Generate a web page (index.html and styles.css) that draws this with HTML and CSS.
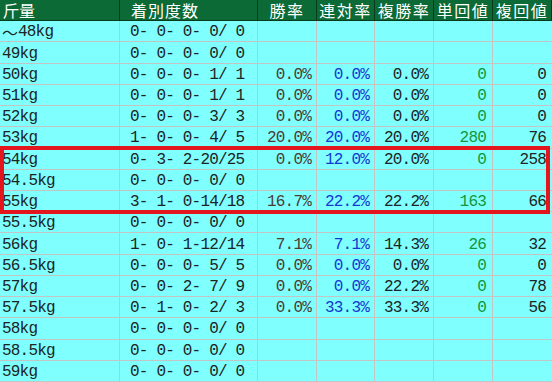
FILE: index.html
```html
<!DOCTYPE html>
<html lang="ja">
<head>
<meta charset="utf-8">
<title>斤量別成績</title>
<link rel="stylesheet" href="styles.css">
</head>
<body>
<div class="wrap">
  <div class="grid">
    <div class="h h1">斤量</div><div class="h h2">着別度数</div><div class="h hc">勝率</div><div class="h hc">連対率</div><div class="h hc">複勝率</div><div class="h hc">単回値</div><div class="h hc">複回値</div>

    <div class="c w"><span class="wave">～</span>48kg</div><div class="c d">0- 0- 0- 0/ 0</div><div class="c r p1"></div><div class="c r p2"></div><div class="c r p3"></div><div class="c r g"></div><div class="c r k"></div>
    <div class="c w">49kg</div><div class="c d">0- 0- 0- 0/ 0</div><div class="c r p1"></div><div class="c r p2"></div><div class="c r p3"></div><div class="c r g"></div><div class="c r k"></div>
    <div class="c w">50kg</div><div class="c d">0- 0- 0- 1/ 1</div><div class="c r p1">0.0%</div><div class="c r p2">0.0%</div><div class="c r p3">0.0%</div><div class="c r g">0</div><div class="c r k">0</div>
    <div class="c w">51kg</div><div class="c d">0- 0- 0- 1/ 1</div><div class="c r p1">0.0%</div><div class="c r p2">0.0%</div><div class="c r p3">0.0%</div><div class="c r g">0</div><div class="c r k">0</div>
    <div class="c w">52kg</div><div class="c d">0- 0- 0- 3/ 3</div><div class="c r p1">0.0%</div><div class="c r p2">0.0%</div><div class="c r p3">0.0%</div><div class="c r g">0</div><div class="c r k">0</div>
    <div class="c w">53kg</div><div class="c d">1- 0- 0- 4/ 5</div><div class="c r p1">20.0%</div><div class="c r p2">20.0%</div><div class="c r p3">20.0%</div><div class="c r g">280</div><div class="c r k">76</div>
    <div class="c w">54kg</div><div class="c d">0- 3- 2-20/25</div><div class="c r p1">0.0%</div><div class="c r p2">12.0%</div><div class="c r p3">20.0%</div><div class="c r g">0</div><div class="c r k">258</div>
    <div class="c w">54.5kg</div><div class="c d">0- 0- 0- 0/ 0</div><div class="c r p1"></div><div class="c r p2"></div><div class="c r p3"></div><div class="c r g"></div><div class="c r k"></div>
    <div class="c w">55kg</div><div class="c d">3- 1- 0-14/18</div><div class="c r p1">16.7%</div><div class="c r p2">22.2%</div><div class="c r p3">22.2%</div><div class="c r g">163</div><div class="c r k">66</div>
    <div class="c w">55.5kg</div><div class="c d">0- 0- 0- 0/ 0</div><div class="c r p1"></div><div class="c r p2"></div><div class="c r p3"></div><div class="c r g"></div><div class="c r k"></div>
    <div class="c w">56kg</div><div class="c d">1- 0- 1-12/14</div><div class="c r p1">7.1%</div><div class="c r p2">7.1%</div><div class="c r p3">14.3%</div><div class="c r g">26</div><div class="c r k">32</div>
    <div class="c w">56.5kg</div><div class="c d">0- 0- 0- 5/ 5</div><div class="c r p1">0.0%</div><div class="c r p2">0.0%</div><div class="c r p3">0.0%</div><div class="c r g">0</div><div class="c r k">0</div>
    <div class="c w">57kg</div><div class="c d">0- 0- 2- 7/ 9</div><div class="c r p1">0.0%</div><div class="c r p2">0.0%</div><div class="c r p3">22.2%</div><div class="c r g">0</div><div class="c r k">78</div>
    <div class="c w">57.5kg</div><div class="c d">0- 1- 0- 2/ 3</div><div class="c r p1">0.0%</div><div class="c r p2">33.3%</div><div class="c r p3">33.3%</div><div class="c r g">0</div><div class="c r k">56</div>
    <div class="c w">58kg</div><div class="c d">0- 0- 0- 0/ 0</div><div class="c r p1"></div><div class="c r p2"></div><div class="c r p3"></div><div class="c r g"></div><div class="c r k"></div>
    <div class="c w">58.5kg</div><div class="c d">0- 0- 0- 0/ 0</div><div class="c r p1"></div><div class="c r p2"></div><div class="c r p3"></div><div class="c r g"></div><div class="c r k"></div>
    <div class="c w">59kg</div><div class="c d">0- 0- 0- 0/ 0</div><div class="c r p1"></div><div class="c r p2"></div><div class="c r p3"></div><div class="c r g"></div><div class="c r k"></div>
  </div>
  <div class="mark"></div>
</div>
</body>
</html>
```
FILE: styles.css
```css
html, body {
  margin: 0;
  padding: 0;
  background: #ffffff;
}

.wrap {
  position: relative;
  width: 552px;
  height: 382px;
  overflow: hidden;
}

.grid {
  display: grid;
  grid-template-columns: 120px 138px 59px 58px 59px 59px 59px;
  grid-template-rows: repeat(18, 1fr);
  width: 552px;
  height: 382px;
}

.h {
  background: #0c6a36;
  color: #ffffff;
  font-family: "Noto Sans CJK JP", sans-serif;
  font-size: 16px;
  line-height: 19px;
  display: flex;
  align-items: center;
  white-space: nowrap;
  box-sizing: border-box;
  border-right: 1px solid #0a3a1c;
  border-bottom: 1px solid #0a3a1c;
}

.h1 { padding-left: 3px; }
.h2 { padding-left: 11px; letter-spacing: 1px; }
.hc { justify-content: center; letter-spacing: 1.5px; }

.c {
  background: #80ffff;
  color: #1c2424;
  font-family: "Liberation Mono", "DejaVu Sans Mono", monospace;
  font-size: 16px;
  letter-spacing: -0.8px;
  line-height: 18px;
  display: flex;
  align-items: center;
  white-space: pre;
  box-sizing: border-box;
  border-right: 1px solid #c4c4c4;
  border-bottom: 1px solid #c4c4c4;
  padding-top: 2px;
}

.wave {
  font-family: "Noto Sans CJK JP", sans-serif;
  font-size: 16px;
  letter-spacing: 0;
}

.w { padding-left: 2px; }
.d { padding-left: 10px; }
.r { justify-content: flex-end; padding-right: 5px; }
.g { padding-right: 6px; }
.k { padding-right: 6px; border-right: none; }

.p1 { color: #4a3c34; }
.p2 { color: #1438d0; }
.p3 { color: #1c2424; }
.g { color: #14963a; }

.mark {
  position: absolute;
  left: 0;
  top: 146px;
  width: 550px;
  height: 68px;
  box-sizing: border-box;
  border: 4px solid #e3161e;
}
```
